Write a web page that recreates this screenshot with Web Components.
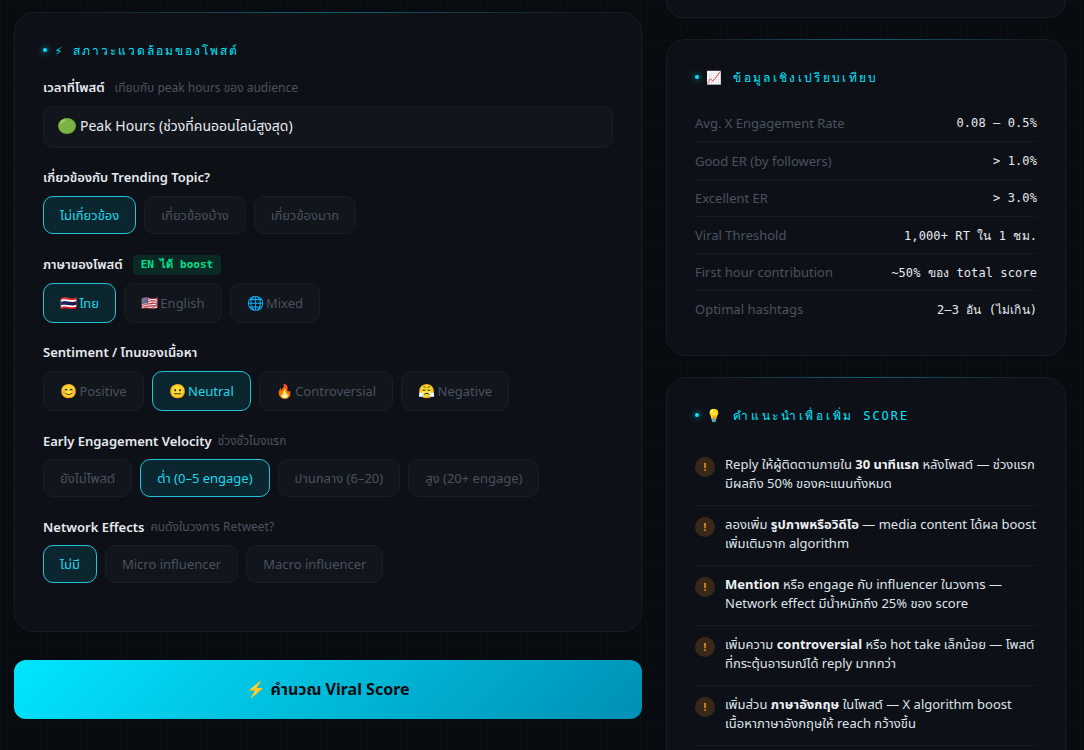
<!DOCTYPE html>
<html lang="th">
<head>
<meta charset="utf-8">
<title>Viral Score</title>
<style>
  html, body { margin: 0; height: 750px; overflow: hidden; background: #080b0f; }
  body { font-family: "Noto Sans", "Noto Sans Thai", sans-serif; color: #e8eaf0; }
  .emo { display: inline-block; transform: scale(1.06); }
</style>
</head>
<body>
<viral-app>
  <div slot="left">
    <viral-card top="12" bottom="28">
      <viral-title>⚡ สภาวะแวดล้อมของโพสต์</viral-title>
      <viral-field label="เวลาที่โพสต์" hint="เทียบกับ peak hours ของ audience" wide>
        <viral-select><span class="emo" style="transform:scale(1.16,1.04);margin-right:5px">🟢</span>Peak Hours (ช่วงที่คนออนไลน์สูงสุด)</viral-select>
      </viral-field>
      <viral-field label="เกี่ยวข้องกับ Trending Topic?">
        <viral-chip active>ไม่เกี่ยวข้อง</viral-chip>
        <viral-chip>เกี่ยวข้องบ้าง</viral-chip>
        <viral-chip>เกี่ยวข้องมาก</viral-chip>
      </viral-field>
      <viral-field label="ภาษาของโพสต์" badge="EN ได้ boost" wide>
        <viral-chip tall active><span class="emo">🇹🇭</span> ไทย</viral-chip>
        <viral-chip tall><span class="emo">🇺🇸</span> English</viral-chip>
        <viral-chip tall><span class="emo">🌐</span> Mixed</viral-chip>
      </viral-field>
      <viral-field label="Sentiment / โทนของเนื้อหา">
        <viral-chip tall><span class="emo">😊</span> Positive</viral-chip>
        <viral-chip tall active><span class="emo">😐</span> Neutral</viral-chip>
        <viral-chip tall><span class="emo">🔥</span> Controversial</viral-chip>
        <viral-chip tall><span class="emo">😤</span> Negative</viral-chip>
      </viral-field>
      <viral-field label="Early Engagement Velocity" hint="ช่วงชั่วโมงแรก">
        <viral-chip>ยังไม่โพสต์</viral-chip>
        <viral-chip active>ต่ำ (0–5 engage)</viral-chip>
        <viral-chip>ปานกลาง (6–20)</viral-chip>
        <viral-chip>สูง (20+ engage)</viral-chip>
      </viral-field>
      <viral-field label="Network Effects" hint="คนดังในวงการ Retweet?">
        <viral-chip active>ไม่มี</viral-chip>
        <viral-chip>Micro influencer</viral-chip>
        <viral-chip>Macro influencer</viral-chip>
      </viral-field>
    </viral-card>
    <viral-cta>⚡ คำนวณ Viral Score</viral-cta>
  </div>
  <div slot="right">
    <viral-stub></viral-stub>
    <viral-card>
      <viral-title><span class="emo">📈</span> <span style="letter-spacing:2.35px">ข้อมูลเชิงเปรียบเทียบ</span></viral-title>
      <viral-stat label="Avg. X Engagement Rate">0.08 – 0.5%</viral-stat>
      <viral-stat label="Good ER (by followers)">&gt; 1.0%</viral-stat>
      <viral-stat label="Excellent ER">&gt; 3.0%</viral-stat>
      <viral-stat label="Viral Threshold">1,000+ RT ใน 1 ชม.</viral-stat>
      <viral-stat label="First hour contribution">~50% ของ total score</viral-stat>
      <viral-stat label="Optimal hashtags" last>2–3 อัน (ไม่เกิน)</viral-stat>
    </viral-card>
    <viral-card>
      <viral-title><span class="emo">💡</span> <span style="letter-spacing:2.7px">คำแนะนำเพื่อเพิ่ม</span> SCORE</viral-title>
      <viral-tip>Reply ให้ผู้ติดตามภายใน <b>30 นาทีแรก</b> หลังโพสต์ — ช่วงแรกมีผลถึง 50% ของคะแนนทั้งหมด</viral-tip>
      <viral-tip>ลองเพิ่ม <b>รูปภาพหรือวิดีโอ</b> — media content ได้ผล boost เพิ่มเติมจาก algorithm</viral-tip>
      <viral-tip><b>Mention</b> หรือ engage กับ influencer ในวงการ — Network effect มีน้ำหนักถึง 25% ของ score</viral-tip>
      <viral-tip>เพิ่มความ <b>controversial</b> หรือ hot take เล็กน้อย — โพสต์ที่กระตุ้นอารมณ์ได้ reply มากกว่า</viral-tip>
      <viral-tip>เพิ่มส่วน <b>ภาษาอังกฤษ</b> ในโพสต์ — X algorithm boost เนื้อหาภาษาอังกฤษให้ reach กว้างขึ้น</viral-tip>
    </viral-card>
  </div>
</viral-app>

<script>
const MONO = '"DejaVu Sans Mono", "Liberation Mono", monospace';

class ViralApp extends HTMLElement {
  constructor() {
    super();
    this.attachShadow({ mode: "open" });
    this.shadowRoot.innerHTML = `
      <style>
        :host {
          display: grid;
          grid-template-columns: 628px 400px;
          column-gap: 24px;
          padding: 0 18px 0 14px;
          height: 750px;
          overflow: hidden;
          background-color: #080b0f;
          background-image:
            linear-gradient(rgba(0,229,255,.028) 1px, transparent 1px),
            linear-gradient(90deg, rgba(0,229,255,.028) 1px, transparent 1px);
          background-size: 40px 40px;
        }
      </style>
      <div><slot name="left"></slot></div>
      <div><slot name="right"></slot></div>
    `;
  }
}

// ส่วนท้ายของการ์ดก่อนหน้า ที่โผล่มาจากขอบบน
class ViralStub extends HTMLElement {
  constructor() {
    super();
    this.attachShadow({ mode: "open" });
    this.shadowRoot.innerHTML = `
      <style>
        :host {
          display: block;
          height: 18px;
          margin-bottom: 21px;
          box-sizing: border-box;
          background: #0d1117;
          border: 1px solid #171c25;
          border-top: none;
          border-radius: 0 0 20px 20px;
        }
      </style>
    `;
  }
}

class ViralCard extends HTMLElement {
  constructor() {
    super();
    this.attachShadow({ mode: "open" });
    this.shadowRoot.innerHTML = `
      <style>
        :host {
          display: block;
          position: relative;
          box-sizing: border-box;
          background: #0d1117;
          border: 1px solid #171c25;
          border-radius: 20px;
          padding: 27px 28px 27px;
          margin-bottom: 21px;
        }
        .glow {
          position: absolute;
          top: -1px;
          left: 10%;
          right: 10%;
          height: 1px;
          background: linear-gradient(90deg, transparent, rgba(0,229,255,.35), transparent);
        }
      </style>
      <div class="glow"></div>
      <slot></slot>
    `;
  }

  connectedCallback() {
    if (this.hasAttribute("top")) this.style.marginTop = this.getAttribute("top") + "px";
    if (this.hasAttribute("bottom")) this.style.paddingBottom = this.getAttribute("bottom") + "px";
  }
}

class ViralTitle extends HTMLElement {
  constructor() {
    super();
    this.attachShadow({ mode: "open" });
    this.shadowRoot.innerHTML = `
      <style>
        :host {
          display: flex;
          align-items: center;
          gap: 8px;
          height: 18px;
          margin: 1px 0 19px;
          font: 12px ${MONO};
          letter-spacing: 2px;
          color: #00e5ff;
          white-space: nowrap;
        }
        .dot {
          width: 4px;
          height: 4px;
          border-radius: 50%;
          background: #00e5ff;
          box-shadow: 0 0 6px #00e5ff;
        }
      </style>
      <span class="dot"></span><span><slot></slot></span>
    `;
  }
}

class ViralField extends HTMLElement {
  constructor() {
    super();
    this.attachShadow({ mode: "open" });
    this.shadowRoot.innerHTML = `
      <style>
        :host { display: block; margin-bottom: 20px; }
        .head {
          display: flex;
          align-items: center;
          gap: 6px;
          height: 20px;
          margin-bottom: 8px;
          font-size: 13px;
          font-weight: 600;
          color: #e8eaf0;
          white-space: nowrap;
        }
        :host([wide]) .head { gap: 10px; }
        :host([badge]) .head { height: 21px; }
        .hint { font-size: 12px; font-weight: 400; color: #4a5160; }
        .badge {
          display: none;
          padding: 0 8px;
          border-radius: 4px;
          background: rgba(0,255,157,.1);
          color: #00e08a;
          font: 700 11px/20px ${MONO};
        }
        .body { display: flex; gap: 8px; }
      </style>
      <div class="head"><span class="label"></span><span class="hint"></span><span class="badge"></span></div>
      <div class="body"><slot></slot></div>
    `;
  }

  connectedCallback() {
    const r = this.shadowRoot;
    r.querySelector(".label").textContent = this.getAttribute("label");
    const hint = r.querySelector(".hint");
    if (this.hasAttribute("hint")) hint.textContent = this.getAttribute("hint");
    else hint.style.display = "none";
    if (this.hasAttribute("badge")) {
      const b = r.querySelector(".badge");
      b.textContent = this.getAttribute("badge");
      b.style.display = "block";
    }
  }
}

class ViralSelect extends HTMLElement {
  constructor() {
    super();
    this.attachShadow({ mode: "open" });
    this.shadowRoot.innerHTML = `
      <style>
        :host {
          display: block;
          flex: 1;
          box-sizing: border-box;
          height: 42px;
          line-height: 38px;
          padding: 0 14px;
          background: #11151c;
          border: 1px solid #181d26;
          border-radius: 10px;
          font-size: 14px;
          color: #e8eaf0;
          white-space: nowrap;
        }
      </style>
      <slot></slot>
    `;
  }
}

class ViralChip extends HTMLElement {
  constructor() {
    super();
    this.attachShadow({ mode: "open" });
    this.shadowRoot.innerHTML = `
      <style>
        :host {
          display: block;
          box-sizing: border-box;
          padding: 8px 16px;
          background: #11151c;
          border: 1px solid #181d26;
          border-radius: 10px;
          font-size: 13px;
          line-height: 20px;
          color: #4a5160;
          white-space: nowrap;
        }
        :host([tall]) { padding-top: 9px; padding-bottom: 9px; }
        :host([active]) {
          background: rgba(0,229,255,.1);
          border-color: #1fc4d8;
          color: #1fd8ee;
        }
      </style>
      <slot></slot>
    `;
  }
}

class ViralCta extends HTMLElement {
  constructor() {
    super();
    this.attachShadow({ mode: "open" });
    this.shadowRoot.innerHTML = `
      <style>
        :host {
          display: flex;
          align-items: center;
          justify-content: center;
          height: 59px;
          margin-top: 28px;
          border-radius: 12px;
          background: linear-gradient(135deg, #00e5ff, #0090b4);
          color: #080b0f;
          font-size: 16px;
          font-weight: 700;
        }
      </style>
      <slot></slot>
    `;
  }
}

class ViralStat extends HTMLElement {
  constructor() {
    super();
    this.attachShadow({ mode: "open" });
    this.shadowRoot.innerHTML = `
      <style>
        :host {
          display: flex;
          justify-content: space-between;
          align-items: center;
          box-sizing: border-box;
          height: 37px;
          border-bottom: 1px solid #151a22;
          font-size: 13px;
          white-space: nowrap;
        }
        :host(:nth-of-type(2)) { margin-top: 1px; }
        :host([last]) { border-bottom-color: transparent; }
        .k { color: #4a5160; }
        .v { font: 12px ${MONO}; letter-spacing: .1px; color: #e8eaf0; }
      </style>
      <span class="k"></span><span class="v"><slot></slot></span>
    `;
  }

  connectedCallback() {
    this.shadowRoot.querySelector(".k").textContent = this.getAttribute("label");
  }
}

class ViralTip extends HTMLElement {
  constructor() {
    super();
    this.attachShadow({ mode: "open" });
    this.shadowRoot.innerHTML = `
      <style>
        :host {
          display: flex;
          gap: 10px;
          padding: 9px 0 12px;
          border-bottom: 1px solid #151a22;
          font-size: 13px;
          line-height: 19px;
          color: #dfe3ea;
        }
        :host(:nth-of-type(1)) { padding-top: 12px; }
        ::slotted(b) { color: #eef0f4; font-weight: 700; }
        .ico {
          flex: none;
          width: 20px;
          height: 20px;
          margin-top: 2px;
          border-radius: 50%;
          background: rgba(255,150,30,.18);
          color: #e8962a;
          font-size: 10px;
          font-weight: 700;
          line-height: 20px;
          text-align: center;
        }
      </style>
      <span class="ico">!</span><div><slot></slot></div>
    `;
  }
}

customElements.define("viral-app", ViralApp);
customElements.define("viral-stub", ViralStub);
customElements.define("viral-card", ViralCard);
customElements.define("viral-title", ViralTitle);
customElements.define("viral-field", ViralField);
customElements.define("viral-select", ViralSelect);
customElements.define("viral-chip", ViralChip);
customElements.define("viral-cta", ViralCta);
customElements.define("viral-stat", ViralStat);
customElements.define("viral-tip", ViralTip);
</script>
</body>
</html>
